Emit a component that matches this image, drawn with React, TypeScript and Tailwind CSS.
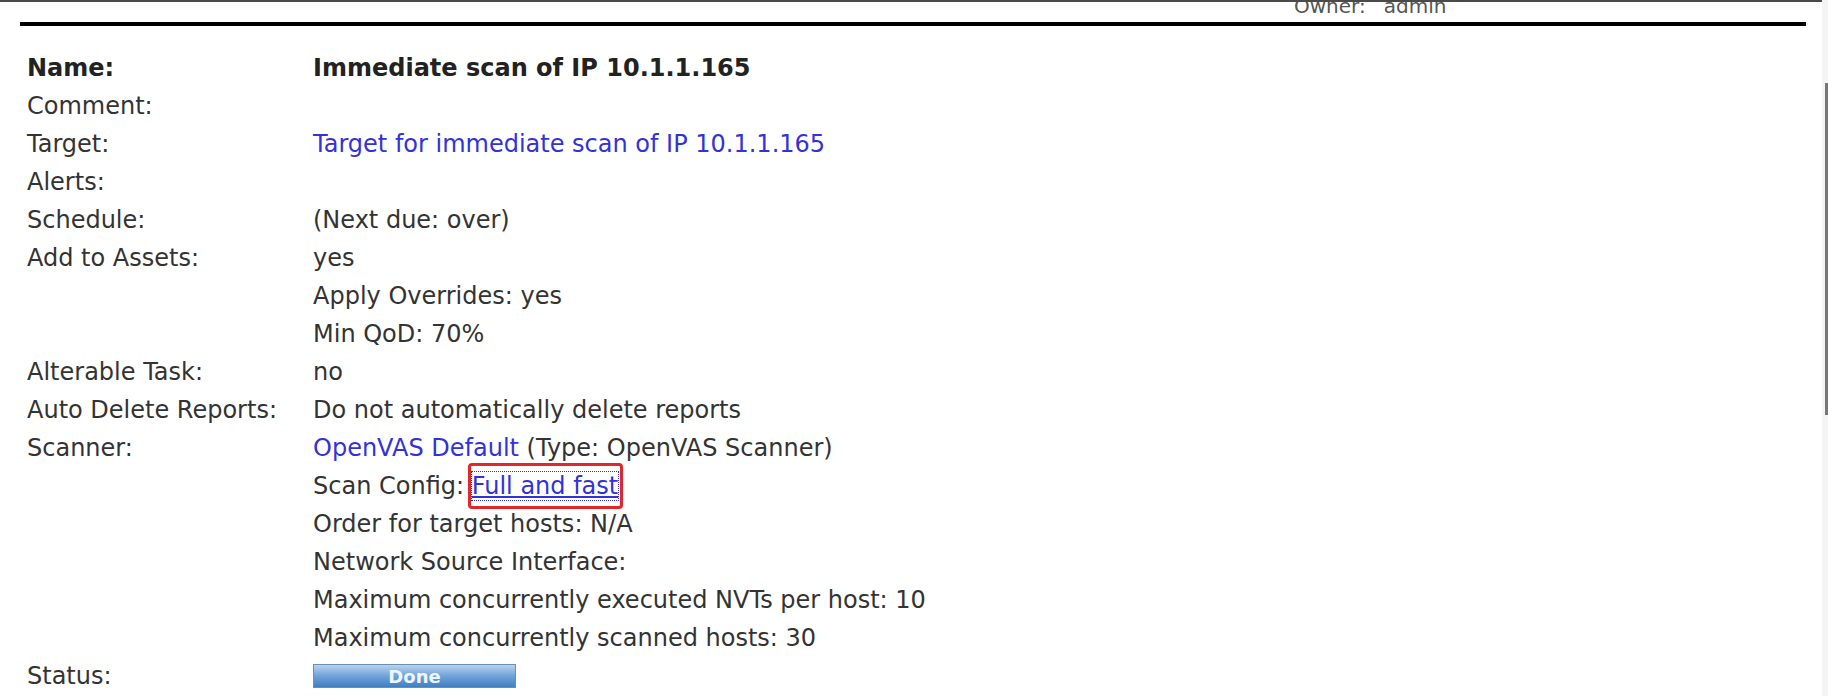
const rows: { label: string; value?: React.ReactNode; bold?: boolean }[] = [
  { label: 'Name:', value: 'Immediate scan of IP 10.1.1.165', bold: true },
  { label: 'Comment:' },
  {
    label: 'Target:',
    value: <a className="text-[#3232d8]">Target for immediate scan of IP 10.1.1.165</a>,
  },
  { label: 'Alerts:' },
  { label: 'Schedule:', value: '(Next due: over)' },
  { label: 'Add to Assets:', value: 'yes' },
  { label: '', value: 'Apply Overrides: yes' },
  { label: '', value: 'Min QoD: 70%' },
  { label: 'Alterable Task:', value: 'no' },
  { label: 'Auto Delete Reports:', value: 'Do not automatically delete reports' },
  {
    label: 'Scanner:',
    value: (
      <>
        <a className="text-[#3232d8]">OpenVAS Default</a> (Type: OpenVAS Scanner)
      </>
    ),
  },
  {
    label: '',
    value: (
      <>
        Scan Config:{' '}
        <span className="relative inline-block">
          <a className="text-[#3232d8] underline decoration-[#3232d8] underline-offset-2 outline-1 outline-dotted outline-[#3232d8]">
            Full and fast
          </a>
          <span className="pointer-events-none absolute -left-[4px] -right-[5px] -top-[5px] -bottom-[5px] rounded-[4px] border-[3px] border-[#e0282a]" />
        </span>
      </>
    ),
  },
  { label: '', value: 'Order for target hosts: N/A' },
  { label: '', value: 'Network Source Interface:' },
  { label: '', value: 'Maximum concurrently executed NVTs per host: 10' },
  { label: '', value: 'Maximum concurrently scanned hosts: 30' },
];

export default function App() {
  return (
    <div className="relative h-[696px] w-[1828px] overflow-hidden bg-white font-['DejaVu_Sans',sans-serif] text-[24px] text-[#333]">
      <div className="h-[2px] bg-[#4a4a4a]" />
      <div className="h-[20px] overflow-hidden">
        <div className="-mt-[6px] flex gap-[18px] pl-[1294px] text-[20px] leading-[20px] text-[#555]">
          <span>Owner:</span>
          <span>admin</span>
        </div>
      </div>
      <div className="ml-[20px] h-[4px] w-[1786px] bg-black" />

      <div className="mt-[23px] grid grid-cols-[286px_1fr] pl-[27px]">
        {rows.map((row, i) => (
          <div key={i} className="contents">
            <div className={`flex h-[38px] items-center ${row.bold ? 'font-bold text-[#222]' : ''}`}>{row.label}</div>
            <div className={`flex h-[38px] items-center whitespace-pre ${row.bold ? 'font-bold text-[#222]' : ''}`}>
              {row.value}
            </div>
          </div>
        ))}
        <div className="flex h-[38px] items-center">Status:</div>
        <div className="flex h-[38px] items-center">
          <div className="flex h-[24px] w-[203px] items-center justify-center border border-[#6a8fb5] bg-gradient-to-b from-[#b9d3ee] via-[#6fa3d8] to-[#3f7fc0] text-[18px] font-bold text-[#eef5ff]">
            Done
          </div>
        </div>
      </div>

      <div className="absolute right-0 top-0 h-full w-[6px] bg-[#f4f4f4]" />
      <div className="absolute right-0 top-[83px] h-[332px] w-[3px] bg-[#777]" />
    </div>
  );
}
